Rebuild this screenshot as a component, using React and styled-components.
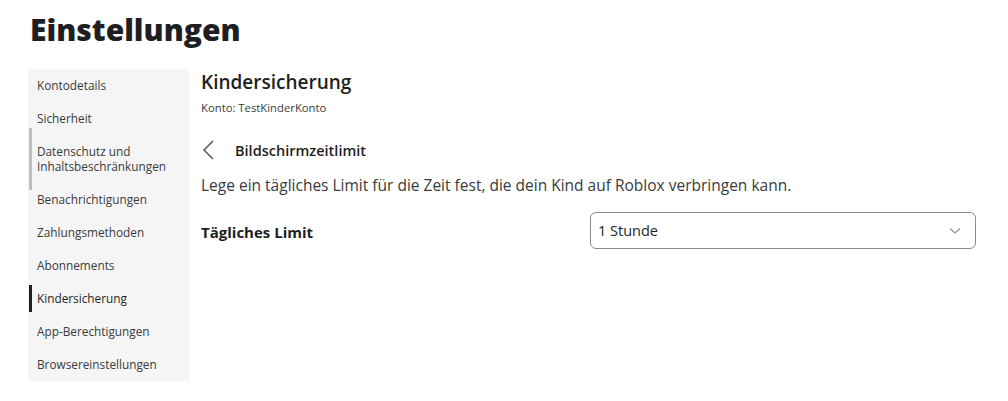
import React from 'react';
import styled, { createGlobalStyle } from 'styled-components';

const GlobalStyle = createGlobalStyle`
    body {
        margin: 0;
        background: #ffffff;
        font-family: 'Open Sans', 'Liberation Sans', sans-serif;
        color: #1e1f22;
    }
`
const Page = styled.div`
    padding: 10px 32px 0 28px;
`
const Title = styled.h1`
    margin: 0 0 0 2px;
    font-size: 30px;
    font-weight: 800;
    line-height: 40px;
    color: #1e1f22;
`
const Layout = styled.div`
    display: flex;
    margin-top: 19px;
`
const Sidebar = styled.nav`
    width: 161px;
    flex-shrink: 0;
    background: #f5f5f5;
    display: flex;
    flex-direction: column;
`
const NavItem = styled.div`
    position: relative;
    padding: 9px 9px;
    font-size: 11.8px;
    line-height: 15px;
    color: ${({ active }) => active ? '#1e1f22' : '#393b3d'};
    &::before {
        content: '';
        display: ${({ bar }) => bar ? 'block' : 'none'};
        position: absolute;
        left: 1px;
        top: ${({ active }) => active ? '3px' : '-7px'};
        bottom: ${({ active }) => active ? '3px' : '-7px'};
        width: 3px;
        background: ${({ active }) => active ? '#1e1f22' : '#bdbebe'};
    }
`
const Main = styled.main`
    flex: 1;
    padding-left: 12px;
`
const SectionTitle = styled.h2`
    margin: 0;
    font-size: 19px;
    font-weight: 600;
    line-height: 26px;
`
const Account = styled.div`
    font-size: 11.3px;
    line-height: 16px;
    margin-top: 5px;
    color: #393b3d;
`
const BackRow = styled.div`
    display: flex;
    align-items: center;
    gap: 20px;
    margin-top: 21px;
    height: 26px;
`
const BackTitle = styled.span`
    font-size: 14.5px;
    font-weight: 600;
`
const Description = styled.p`
    margin: 12px 0 0 0;
    font-size: 15.5px;
    line-height: 20px;
    color: #393b3d;
`
const LimitRow = styled.div`
    display: flex;
    align-items: center;
    justify-content: space-between;
    margin-top: 17px;
`
const LimitLabel = styled.span`
    font-size: 15px;
    font-weight: 700;
    margin-top: 3px;
`
const Select = styled.div`
    width: 386px;
    height: 37px;
    box-sizing: border-box;
    border: 1.5px solid #8a8b8c;
    border-radius: 6px;
    display: flex;
    align-items: center;
    justify-content: space-between;
    padding: 0 14px 0 7px;
    font-size: 14.5px;
    color: #1e1f22;
`

const navItems = [
    { label: 'Kontodetails' },
    { label: 'Sicherheit' },
    { label: 'Datenschutz und Inhaltsbeschränkungen', bar: true },
    { label: 'Benachrichtigungen' },
    { label: 'Zahlungsmethoden' },
    { label: 'Abonnements' },
    { label: 'Kindersicherung', bar: true, active: true },
    { label: 'App-Berechtigungen' },
    { label: 'Browsereinstellungen' },
]

function App() {
    return (
        <Page>
            <GlobalStyle />
            <Title>Einstellungen</Title>
            <Layout>
                <Sidebar>
                    {navItems.map(item => (
                        <NavItem key={item.label} bar={item.bar} active={item.active}>{item.label}</NavItem>
                    ))}
                </Sidebar>
                <Main>
                    <SectionTitle>Kindersicherung</SectionTitle>
                    <Account>Konto: TestKinderKonto</Account>
                    <BackRow>
                        <svg width="14" height="20" viewBox="0 0 14 20">
                            <path d="M12 1 L3 10 L12 19" fill="none" stroke="#5a5b5d" strokeWidth="1.6" />
                        </svg>
                        <BackTitle>Bildschirmzeitlimit</BackTitle>
                    </BackRow>
                    <Description>Lege ein tägliches Limit für die Zeit fest, die dein Kind auf Roblox verbringen kann.</Description>
                    <LimitRow>
                        <LimitLabel>Tägliches Limit</LimitLabel>
                        <Select>
                            <span>1 Stunde</span>
                            <svg width="12" height="8" viewBox="0 0 12 8">
                                <path d="M1 1.5 L6 6 L11 1.5" fill="none" stroke="#8f9091" strokeWidth="1.2" />
                            </svg>
                        </Select>
                    </LimitRow>
                </Main>
            </Layout>
        </Page>
    )
}

export default App;
